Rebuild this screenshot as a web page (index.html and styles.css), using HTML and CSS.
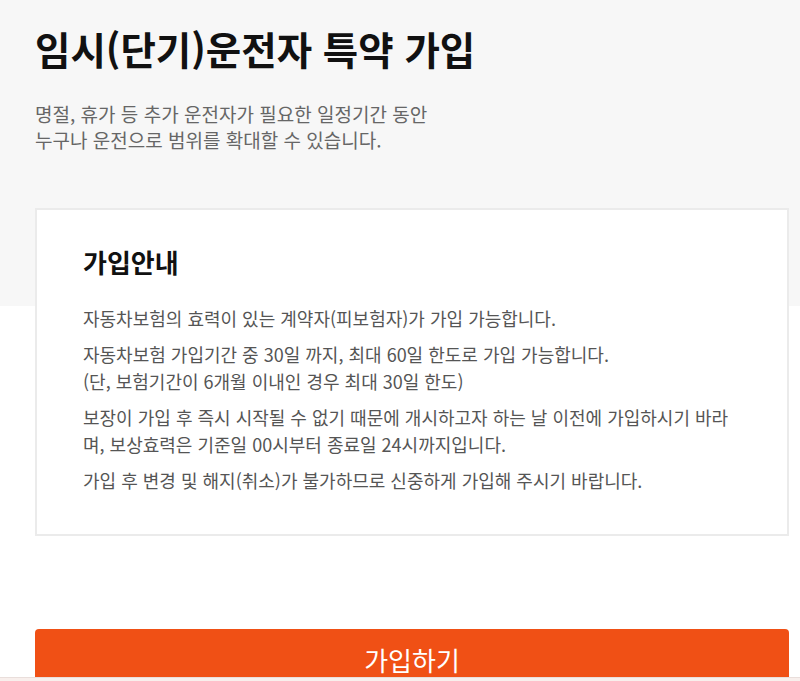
FILE: index.html
```html
<!DOCTYPE html>
<html lang="ko">
<head>
    <meta charset="UTF-8">
    <meta name="viewport" content="width=device-width, initial-scale=1.0">
    <title>임시(단기)운전자 특약 가입</title>
    <link rel="stylesheet" href="styles.css">
</head>
<body>
    <div class="page">
        <h1 class="title">임시(단기)운전자 특약 가입</h1>
        <p class="lead">명절, 휴가 등 추가 운전자가 필요한 일정기간 동안<br>누구나 운전으로 범위를 확대할 수 있습니다.</p>

        <div class="guide">
            <h2>가입안내</h2>
            <p>자동차보험의 효력이 있는 계약자(피보험자)가 가입 가능합니다.</p>
            <p>자동차보험 가입기간 중 30일 까지, 최대 60일 한도로 가입 가능합니다.<br>(단, 보험기간이 6개월 이내인 경우 최대 30일 한도)</p>
            <p>보장이 가입 후 즉시 시작될 수 없기 때문에 개시하고자 하는 날 이전에 가입하시기 바라며, 보상효력은 기준일 00시부터 종료일 24시까지입니다.</p>
            <p>가입 후 변경 및 해지(취소)가 불가하므로 신중하게 가입해 주시기 바랍니다.</p>
        </div>

        <button class="join-btn" type="button">가입하기</button>
    </div>
    <div class="bottom-edge"></div>
</body>
</html>
```

FILE: styles.css
```css
body {
    margin: 0;
    font-family: "Noto Sans CJK KR", "Noto Sans", sans-serif;
    background: #fff;
}
.page {
    padding: 23px 11px 40px 35px;
    background: linear-gradient(to bottom, #f7f7f7 306px, #fff 306px);
}
.title {
    margin: 0;
    font-size: 38.5px;
    line-height: 50px;
    font-weight: 700;
    color: #111;
}
.lead {
    margin: 28px 0 0;
    font-size: 19px;
    line-height: 26px;
    color: #666;
}
.guide {
    margin-top: 55px;
    padding: 36px 46px 40px;
    background: #fff;
    border: 2px solid #ebebeb;
}
.guide h2 {
    margin: 0 0 27px;
    font-size: 26px;
    line-height: 32px;
    font-weight: 700;
    color: #111;
}
.guide p {
    margin: 9px 0 0;
    font-size: 18px;
    line-height: 27px;
    color: #555;
}
.guide h2 + p {
    margin-top: 0;
}
.join-btn {
    display: block;
    width: 100%;
    height: 60px;
    margin-top: 93px;
    border: none;
    border-radius: 4px;
    background: #f05015;
    color: #fff;
    font-family: inherit;
    font-size: 26px;
    cursor: pointer;
}
.bottom-edge {
    position: fixed;
    left: 0;
    right: 0;
    bottom: 0;
    height: 3px;
    background: #f8efec;
    border-top: 1px solid #e9dedb;
}
```
